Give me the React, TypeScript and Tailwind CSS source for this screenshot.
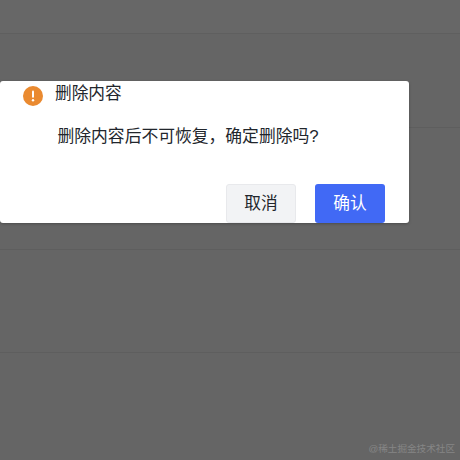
import React from "react";

const font = { cjk: "font-['Liberation_Sans','Noto_Sans_CJK_SC',sans-serif]" };

const App: React.FC = () => {
  return (
    <div className={`relative h-[460px] w-[460px] overflow-hidden bg-[#656565] ${font.cjk}`}>
      {/* Page rows behind the mask */}
      <div className="flex flex-col">
        <div className="h-[34px] border-b border-[#5f5f5f] bg-[#676767]" />
        <div className="h-[94px] border-b border-[#5e5e5e]" />
        <div className="h-[122px] border-b border-[#5e5e5e]" />
        <div className="h-[103px] border-b border-[#5e5e5e]" />
      </div>

      {/* Dialog */}
      <div className="absolute left-0 top-[81px] flex h-[141.5px] w-[409px] flex-col rounded-[3px] bg-white shadow-[0_1px_3px_rgba(0,0,0,0.25)]">
        <div className="flex h-[24px] items-start">
          <svg className="ml-[23px] mt-[5px] h-[20px] w-[20px] shrink-0" viewBox="0 0 20 20">
            <circle cx="10" cy="10" r="10" fill="#ea8a30" />
            <rect x="9" y="4.6" width="2" height="7.2" rx="1" fill="#fff" />
            <circle cx="10" cy="14.2" r="1.2" fill="#fff" />
          </svg>
          <span className="ml-[12px] mt-[1px] text-[16.7px] leading-[24px] text-[#22262c]">删除内容</span>
        </div>
        <p className="ml-[57.5px] mt-[20px] text-[16.8px] leading-[24px] text-[#22262c]">
          删除内容后不可恢复，确定删除吗?
        </p>
        <div className="mt-auto flex justify-end gap-[19px] pr-[24px]">
          <button className="h-[38.5px] w-[70px] rounded-[3px] border border-[#e8e9ec] bg-[#f2f3f5] pt-[1px] text-[16.7px] text-[#22262c]">
            取消
          </button>
          <button className="h-[38.5px] w-[70px] rounded-[3px] bg-[#4169f5] pt-[1px] text-[16.7px] text-white">
            确认
          </button>
        </div>
      </div>

      {/* Watermark */}
      <span className="absolute bottom-[4px] right-[5px] text-[9.6px] leading-[14px] text-[#858585]">
        @稀土掘金技术社区
      </span>
    </div>
  );
};

export default App;
